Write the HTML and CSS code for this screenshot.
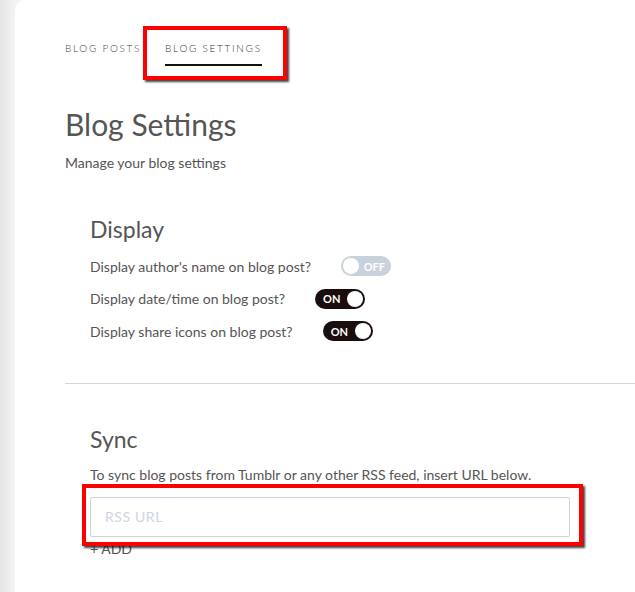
FILE: index.html
```html
<!DOCTYPE html>
<html>
<head>
<meta charset="utf-8">
<link rel="stylesheet" href="styles.css">
</head>
<body>
<div class="card">
  <nav class="tabs">
    <span class="tab">BLOG POSTS</span>
    <span class="tab active">BLOG SETTINGS</span>
  </nav>
  <h1 class="title">Blog Settings</h1>
  <p class="subtitle">Manage your blog settings</p>

  <section class="section">
    <h2 class="section-title">Display</h2>
    <div class="rows">
      <div class="row">
        <span class="label">Display author's name on blog post?</span>
        <span class="toggle off"><span class="knob"></span><span class="state">OFF</span></span>
      </div>
      <div class="row">
        <span class="label">Display date/time on blog post?</span>
        <span class="toggle on"><span class="state">ON</span><span class="knob"></span></span>
      </div>
      <div class="row">
        <span class="label">Display share icons on blog post?</span>
        <span class="toggle on"><span class="state">ON</span><span class="knob"></span></span>
      </div>
    </div>
  </section>

  <hr class="divider">

  <section class="section sync">
    <h2 class="section-title">Sync</h2>
    <p class="hint">To sync blog posts from Tumblr or any other RSS feed, insert URL below.</p>
    <input class="url" type="text" placeholder="RSS URL">
    <div class="add">+ ADD</div>
  </section>

  <div class="mark mark-tab"></div>
  <div class="mark mark-input"></div>
</div>
</body>
</html>
```

FILE: styles.css
```css
html, body {
  margin: 0;
  padding: 0;
}
body {
  background: linear-gradient(to right, #e4e4e4 0, #efefef 10px, #f4f4f4 15px);
  font-family: Lato, "Open Sans", sans-serif;
  color: #555;
  height: 592px;
  overflow: hidden;
}
.card {
  position: relative;
  margin-left: 15px;
  background: #fff;
  border-top-left-radius: 10px;
  min-height: 592px;
  padding-left: 50px;
}
.tabs {
  display: flex;
  gap: 24px;
  padding-top: 42px;
}
.tab {
  font-size: 10px;
  line-height: 12px;
  letter-spacing: 1.7px;
  font-weight: 300;
  color: #444;
  padding-bottom: 10px;
}
.tab.active {
  color: #333;
  border-bottom: 2px solid #111;
}
.title {
  margin: 40px 0 0;
  font-size: 30px;
  line-height: 36px;
  font-weight: 400;
  color: #555;
}
.subtitle {
  margin: 11px 0 0;
  font-size: 14px;
  line-height: 20px;
}
.section {
  padding-left: 25px;
}
.section-title {
  margin: 42px 0 0;
  font-size: 23px;
  line-height: 28px;
  font-weight: 400;
  color: #555;
}
.rows {
  margin-top: 7px;
}
.row {
  display: flex;
  align-items: center;
  gap: 30px;
  height: 32.5px;
}
.label {
  font-size: 14px;
}
.toggle {
  display: inline-flex;
  align-items: center;
  justify-content: space-between;
  box-sizing: border-box;
  width: 50px;
  height: 20px;
  border-radius: 10px;
  padding: 0 2px 0 2px;
  font-size: 11px;
  font-weight: 700;
  color: #fff;
}
.toggle.on {
  background: #1a0d0d;
  padding-left: 8px;
}
.toggle.off {
  background: #c9d1dc;
  padding-right: 6px;
}
.knob {
  width: 16px;
  height: 16px;
  border-radius: 50%;
  background: #fff;
}
.divider {
  border: 0;
  border-top: 1px solid #d4d6dc;
  margin: 35px 0 0;
}
.sync .section-title {
  margin-top: 41px;
}
.hint {
  margin: 12px 0 0;
  font-size: 14px;
  line-height: 20px;
}
.url {
  display: block;
  box-sizing: border-box;
  width: 480px;
  height: 40px;
  margin-top: 12px;
  border: 1px solid #cdd2e0;
  border-radius: 2px;
  padding: 0 14px;
  font-family: Lato, sans-serif;
  font-size: 14px;
  letter-spacing: 0.6px;
  outline: none;
}
.url::placeholder {
  color: #cfd4e2;
}
.add {
  margin-top: 4px;
  font-size: 14px;
  line-height: 16px;
}
.mark {
  position: absolute;
  border: 4px solid #ff0000;
  box-shadow: 2px 2px 2px rgba(0, 0, 0, 0.75);
  box-sizing: border-box;
}
.mark-tab {
  left: 128px;
  top: 26px;
  width: 144px;
  height: 54px;
}
.mark-input {
  left: 67px;
  top: 484px;
  width: 501px;
  height: 62px;
}
```
